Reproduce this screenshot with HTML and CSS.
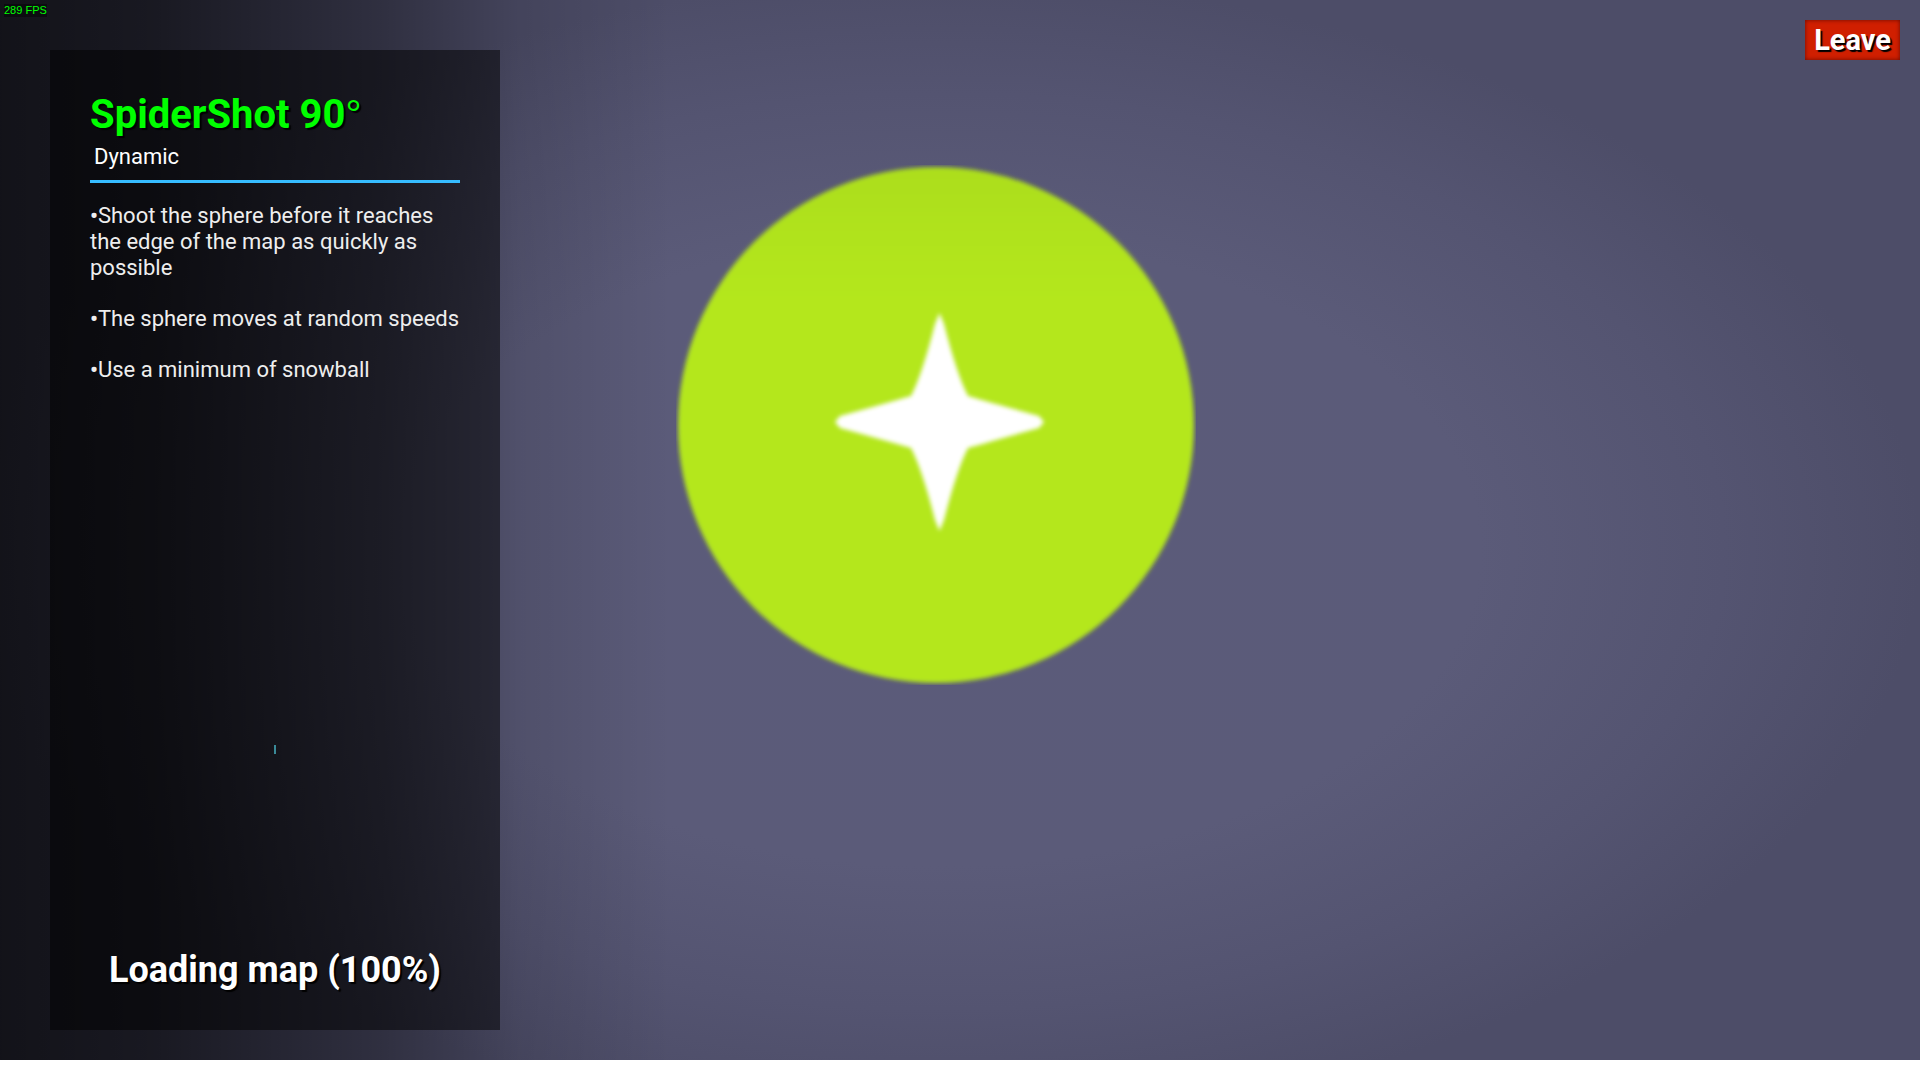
FILE: index.html
```html
<!DOCTYPE html>
<html lang="en">
<head>
<meta charset="utf-8">
<title>SpiderShot 90°</title>
<link rel="stylesheet" href="styles.css">
</head>
<body>
<main class="screen">
  <output class="fps">289 FPS</output>
  <section class="panel">
    <header class="panel-header">
      <h1 class="title">SpiderShot 90<span class="degree">°</span></h1>
      <p class="category">Dynamic</p>
    </header>
    <ul class="rules">
      <li>Shoot the sphere before it reaches the edge of the map as quickly as possible</li>
      <li>The sphere moves at random speeds</li>
      <li>Use a minimum of snowball</li>
    </ul>
    <div class="spinner"></div>
    <p class="status">Loading map (100%)</p>
  </section>
  <div class="art">
    <svg class="target" viewBox="0 0 520 520" aria-hidden="true">
      <defs>
        <linearGradient id="lime" x1="0" y1="0" x2="0" y2="1">
          <stop offset="0" stop-color="#acde1c"/>
          <stop offset="0.26" stop-color="#b4e71d"/>
        </linearGradient>
        <filter id="soft"><feGaussianBlur stdDeviation="2"/></filter>
      </defs>
      <circle cx="260" cy="260" r="258" fill="url(#lime)" filter="url(#soft)"/>
      <path d="M263.500 148L268 159Q281 210 292 231Q316 238 363 251L368 257L363 263Q316 276 292 283Q281 304 268 355L263.500 366L259 355Q246 304 235 283Q211 276 164 263L159 257L164 251Q211 238 235 231Q246 210 259 159Z" fill="#fff" filter="url(#soft)"/>
    </svg>
  </div>
  <button class="leave" type="button">Leave</button>
</main>
</body>
</html>
```
FILE: styles.css
```css
* {
  box-sizing: border-box;
}

body {
  margin: 0;
  background: #fff;
  color: #fff;
  font-family: Roboto, "Liberation Sans", sans-serif;
}

.screen {
  position: relative;
  display: flex;
  align-items: flex-start;
  min-height: calc(100vh - 20px);
  padding: 20px 20px 30px 50px;
  background:
    linear-gradient(90deg, rgba(0, 0, 0, 0.76) 0%, rgba(0, 0, 0, 0.68) 8%, rgba(0, 0, 0, 0.38) 20%, rgba(0, 0, 0, 0.12) 27%, rgba(0, 0, 0, 0) 35%),
    radial-gradient(ellipse 51% 54% at 49% 52%, #5b5b7a 0%, #5b5b79 55%, #545471 80%, #4d4d68 100%);
}

.fps {
  position: absolute;
  top: 4px;
  left: 4px;
  background: rgba(0, 0, 0, 0.4);
  color: #0f0;
  font: 11px/13px "Liberation Sans", sans-serif;
}

.panel {
  display: flex;
  flex: none;
  flex-direction: column;
  align-self: stretch;
  width: 450px;
  margin-top: 30px;
  padding: 40px;
  background: rgba(0, 0, 0, 0.5);
}

.panel-header {
  padding-bottom: 8px;
  border-bottom: 3px solid #36bcff;
}

.title {
  margin: 0;
  color: #0f0;
  font-size: 40px;
  line-height: 50px;
  text-shadow: 2px 2px 1px #000;
}

.degree {
  font-family: "Liberation Sans", sans-serif;
  font-weight: 400;
  line-height: 1;
}

.category {
  margin: 2px 0 0 4px;
  font-size: 22px;
  line-height: 30px;
}

.rules {
  display: flex;
  flex-direction: column;
  gap: 25px;
  margin: 20px 0 0;
  padding: 0;
  color: #eee;
  font-size: 22px;
  line-height: 26px;
  list-style: none;
}

.rules li::before {
  content: "•";
  font-weight: 700;
}

.spinner {
  width: 2px;
  height: 9px;
  margin: auto auto 196px;
  background: #3a8a98;
}

.status {
  margin: 0;
  font-size: 36px;
  font-weight: 700;
  line-height: 40px;
  text-align: center;
  text-shadow: 2px 2px 1px #000;
}

.art {
  flex: 1;
  padding: 145px 0 0 176px;
}

.target {
  display: block;
  width: 520px;
  height: 520px;
}

.leave {
  height: 40px;
  padding: 0 9px;
  border: 0;
  background: #d01f00;
  box-shadow: inset 0 0 4px rgba(60, 0, 0, 0.7);
  color: #fff;
  font: 700 29px/40px Roboto, "Liberation Sans", sans-serif;
  text-shadow: 2px 2px 1px #000;
}
```
